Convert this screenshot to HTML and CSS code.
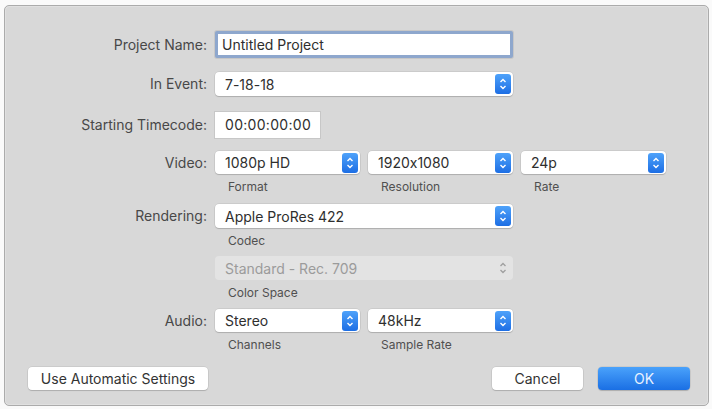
FILE: index.html
```html
<!DOCTYPE html>
<html lang="en">
<head>
    <meta charset="UTF-8">
    <meta name="viewport" content="width=device-width, initial-scale=1.0">
    <title>New Project</title>
    <link rel="stylesheet" href="styles.css">
</head>
<body>
    <div class="dialog">
        <div class="row row-name">
            <label class="label">Project Name:</label>
            <div class="textfield focused wide">Untitled Project</div>
        </div>

        <div class="row row-event">
            <label class="label">In Event:</label>
            <div class="popup wide">
                <span>7-18-18</span>
                <span class="stepper"><svg viewBox="0 0 16 20"><path d="M5.5 8 L8 5.5 L10.5 8 M5.5 12 L8 14.5 L10.5 12" /></svg></span>
            </div>
        </div>

        <div class="row row-timecode">
            <label class="label">Starting Timecode:</label>
            <div class="textfield timecode">00:00:00:00</div>
        </div>

        <div class="row row-video">
            <label class="label">Video:</label>
            <div class="group">
                <div class="popup third">
                    <span>1080p HD</span>
                    <span class="stepper"><svg viewBox="0 0 16 20"><path d="M5.5 8 L8 5.5 L10.5 8 M5.5 12 L8 14.5 L10.5 12" /></svg></span>
                </div>
                <div class="caption">Format</div>
            </div>
            <div class="group">
                <div class="popup third">
                    <span>1920x1080</span>
                    <span class="stepper"><svg viewBox="0 0 16 20"><path d="M5.5 8 L8 5.5 L10.5 8 M5.5 12 L8 14.5 L10.5 12" /></svg></span>
                </div>
                <div class="caption">Resolution</div>
            </div>
            <div class="group">
                <div class="popup third">
                    <span>24p</span>
                    <span class="stepper"><svg viewBox="0 0 16 20"><path d="M5.5 8 L8 5.5 L10.5 8 M5.5 12 L8 14.5 L10.5 12" /></svg></span>
                </div>
                <div class="caption">Rate</div>
            </div>
        </div>

        <div class="row row-render">
            <label class="label">Rendering:</label>
            <div class="group">
                <div class="popup wide">
                    <span>Apple ProRes 422</span>
                    <span class="stepper"><svg viewBox="0 0 16 20"><path d="M5.5 8 L8 5.5 L10.5 8 M5.5 12 L8 14.5 L10.5 12" /></svg></span>
                </div>
                <div class="caption">Codec</div>
            </div>
        </div>

        <div class="row row-color">
            <label class="label"></label>
            <div class="group">
                <div class="popup wide disabled">
                    <span>Standard - Rec. 709</span>
                    <span class="stepper"><svg viewBox="0 0 16 20"><path d="M5.5 8 L8 5.5 L10.5 8 M5.5 12 L8 14.5 L10.5 12" /></svg></span>
                </div>
                <div class="caption">Color Space</div>
            </div>
        </div>

        <div class="row row-audio">
            <label class="label">Audio:</label>
            <div class="group">
                <div class="popup third">
                    <span>Stereo</span>
                    <span class="stepper"><svg viewBox="0 0 16 20"><path d="M5.5 8 L8 5.5 L10.5 8 M5.5 12 L8 14.5 L10.5 12" /></svg></span>
                </div>
                <div class="caption">Channels</div>
            </div>
            <div class="group">
                <div class="popup third">
                    <span>48kHz</span>
                    <span class="stepper"><svg viewBox="0 0 16 20"><path d="M5.5 8 L8 5.5 L10.5 8 M5.5 12 L8 14.5 L10.5 12" /></svg></span>
                </div>
                <div class="caption">Sample Rate</div>
            </div>
        </div>

        <div class="footer">
            <button class="btn auto">Use Automatic Settings</button>
            <div class="actions">
                <button class="btn cancel">Cancel</button>
                <button class="btn primary">OK</button>
            </div>
        </div>
    </div>
</body>
</html>
```

FILE: styles.css
```css
body {
    margin: 0;
    padding: 0;
    background: #fafafa;
    font-family: Inter, "Noto Sans", sans-serif;
    font-size: 14px;
    font-feature-settings: "calt" 0;
    color: #3a3a3a;
}
.dialog {
    box-sizing: border-box;
    width: 705px;
    height: 401px;
    margin: 5px 0 0 4px;
    padding-top: 25px;
    background: #d8d8d8;
    border: 1px solid #ababab;
    border-radius: 5px;
    box-shadow: inset 0 0 0 1px #e0e0e0;
}
.row {
    display: flex;
    align-items: flex-start;
    gap: 8px;
}
.label {
    flex: none;
    width: 202px;
    text-align: right;
    line-height: 24px;
    color: #484848;
}
.row-name .label { line-height: 27px; }
.row-timecode .label { line-height: 26px; }
.row-event { margin-top: 14px; }
.row-timecode { margin-top: 16px; }
.row-video { margin-top: 13px; }
.row-render { margin-top: 10px; }
.row-color { margin-top: 8px; }
.row-audio { margin-top: 9px; }

.group {
    display: flex;
    flex-direction: column;
}
.caption {
    margin-top: 5px;
    padding-left: 13px;
    font-size: 12px;
    line-height: 15px;
    color: #505050;
}

.textfield {
    box-sizing: border-box;
    height: 26px;
    padding: 0 7px;
    line-height: 26px;
    background: #fff;
    color: #2e2e2e;
    box-shadow: 0 0 0 1px rgba(0, 0, 0, 0.08);
}
.textfield.focused {
    height: 27px;
    line-height: 21px;
    padding: 0 4px;
    border: 3px solid #8ea7cd;
    border-radius: 2px;
}
.timecode {
    width: 105px;
    padding: 0 10px;
    letter-spacing: 0.3px;
}

.popup {
    box-sizing: border-box;
    display: flex;
    align-items: center;
    justify-content: space-between;
    height: 24px;
    padding: 0 2px 0 10px;
    background: #fff;
    border-radius: 4px;
    color: #2e2e2e;
    box-shadow: 0 0 0 0.5px rgba(0, 0, 0, 0.12), 0 1px 1px rgba(0, 0, 0, 0.15);
}
.wide { width: 298px; }
.third { width: 145px; }
.row-video .popup, .row-audio .popup { height: 23px; }

.stepper {
    display: flex;
    align-items: center;
    justify-content: center;
    width: 16px;
    height: 20px;
    border-radius: 3px;
    background: linear-gradient(#4ea2fa, #1d6ee4);
}
.stepper svg {
    width: 16px;
    height: 20px;
    fill: none;
    stroke: #fff;
    stroke-width: 1.4;
}
.popup.disabled {
    background: #e3e3e3;
    color: #9b9b9b;
    box-shadow: none;
}
.popup.disabled .stepper { background: none; }
.popup.disabled .stepper svg { stroke: #a0a0a0; }

.footer {
    display: flex;
    justify-content: space-between;
    margin-top: 15px;
    padding: 0 18px 0 23px;
}
.actions {
    display: flex;
    gap: 15px;
}
.btn {
    height: 23px;
    padding: 0;
    border: none;
    border-radius: 4px;
    background: #fff;
    font-family: Inter, "Noto Sans", sans-serif;
    font-size: 14px;
    font-feature-settings: "calt" 0;
    color: #333;
    box-shadow: 0 0 0 0.5px rgba(0, 0, 0, 0.12), 0 1px 1px rgba(0, 0, 0, 0.15);
}
.auto { width: 180px; }
.cancel { width: 91px; }
.primary {
    width: 92px;
    color: #e8f1ff;
    background: linear-gradient(#4aa2fb, #1a6fe4);
}
```
